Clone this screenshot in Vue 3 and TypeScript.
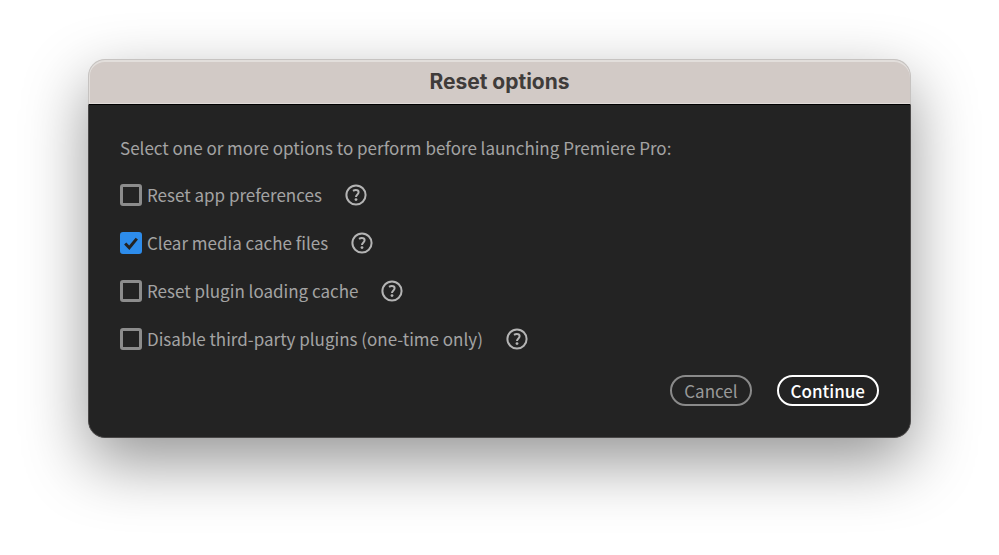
<script setup lang="ts">
import { ref } from 'vue'

interface ResetOption {
  id: string
  label: string
  checked: boolean
}

const options = ref<ResetOption[]>([
  { id: 'preferences', label: 'Reset app preferences', checked: false },
  { id: 'media-cache', label: 'Clear media cache files', checked: true },
  { id: 'plugin-cache', label: 'Reset plugin loading cache', checked: false },
  { id: 'third-party', label: 'Disable third-party plugins (one-time only)', checked: false },
])
</script>

<template>
  <main class="stage">
    <form class="dialog" role="dialog" aria-labelledby="dialog-title" @submit.prevent>
      <header class="titlebar">
        <h1 id="dialog-title">Reset options</h1>
      </header>
      <div class="body">
        <p class="intro">Select one or more options to perform before launching Premiere Pro:</p>
        <div v-for="option in options" :key="option.id" class="row">
          <span class="choice">
            <span class="box">
              <input :id="option.id" v-model="option.checked" type="checkbox" />
              <svg v-if="option.checked" class="tick" viewBox="0 0 22 22" aria-hidden="true">
                <path d="M5.2 11.4 9.3 15.8 16.8 6.6" />
              </svg>
            </span>
            <label :for="option.id">{{ option.label }}</label>
          </span>
          <button type="button" class="help" :aria-describedby="option.id">
            <svg viewBox="0 0 22 22" aria-hidden="true">
              <circle cx="11" cy="11" r="9.6" />
              <path d="M8 6.9C8.9 6.3 9.8 6 10.8 6c1.7 0 2.8.9 2.8 2.3 0 1.1-.6 1.7-1.4 2.4-.8.7-1.2 1.1-1.2 2.2" />
              <circle class="dot" cx="11" cy="15.6" r="1.4" />
            </svg>
          </button>
        </div>
        <footer class="actions">
          <button type="button" class="action">Cancel</button>
          <button type="submit" class="action primary">Continue</button>
        </footer>
      </div>
    </form>
  </main>
</template>

<style>
body {
  background: #fff;
}
</style>

<style scoped>
.stage {
  box-sizing: border-box;
  min-height: 100vh;
  padding: 59px 88px;
  overflow: hidden;
}

.dialog {
  border-radius: 17px;
  color: #a3a3a3;
  font: 17px/22px "Noto Sans CJK SC", "Noto Sans", sans-serif;
  box-shadow: 0 24px 64px rgba(0, 0, 0, 0.42);
}

.titlebar {
  box-sizing: border-box;
  height: 46px;
  border: 1px solid #c6c3c1;
  border-bottom-color: #000;
  border-radius: 17px 17px 0 0;
  background: #d2cac6;
  box-shadow: inset 0 2px #e2dedb, inset 1px 0 #e2dedb, inset 0 -1px #e0dbd8;
  text-align: center;
}

h1 {
  margin: 0;
  color: #403c3a;
  font: 700 21px/44px Inter, sans-serif;
}

.body {
  display: flex;
  flex-direction: column;
  gap: 24px;
  padding: 32px 31px 31px;
  border: 1px solid #4a4848;
  border-top: 0;
  border-radius: 0 0 17px 17px;
  background: #232323;
}

.intro {
  margin: 0;
}

.row {
  display: flex;
  align-items: center;
  gap: 23px;
  height: 24px;
}

.choice {
  display: flex;
  align-items: center;
  gap: 5px;
}

.box {
  position: relative;
  width: 22px;
  height: 22px;
}

input {
  appearance: none;
  display: block;
  box-sizing: border-box;
  width: 22px;
  height: 22px;
  margin: 0;
  border: 3px solid #8c8c8c;
  border-radius: 3px;
}

input:checked {
  border-color: #2d8ceb;
  background: #2d8ceb;
}

svg {
  display: block;
  width: 22px;
  height: 22px;
  fill: none;
  stroke: #b4b4b4;
  stroke-width: 2;
}

.tick {
  position: absolute;
  inset: 0;
  stroke: #232323;
  stroke-width: 3;
  pointer-events: none;
}

.dot {
  fill: #b4b4b4;
  stroke: none;
}

.help {
  padding: 0;
  border: 0;
  background: none;
}

.actions {
  display: flex;
  justify-content: flex-end;
  gap: 25px;
}

.action {
  box-sizing: border-box;
  height: 31px;
  padding: 0 12px;
  border: 2px solid #8a8a8a;
  border-radius: 16px;
  background: none;
  color: #999;
  font: inherit;
}

.primary {
  border-color: #fff;
  color: #fff;
  font-weight: 500;
}
</style>
